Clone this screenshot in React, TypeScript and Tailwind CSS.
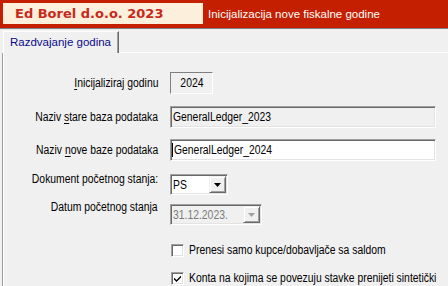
import React from "react";

const base = "font-['Liberation_Sans',sans-serif] text-[12.5px] leading-[14px] whitespace-nowrap";
const squeeze = "inline-block scale-x-[0.83]";
const sunken =
  "border border-t-[#a0a0a0] border-l-[#a0a0a0] border-r-white border-b-white shadow-[inset_1px_1px_0_#696969,inset_-1px_-1px_0_#e3e3e3]";
const raised =
  "border border-t-[#f0f0f0] border-l-[#f0f0f0] border-r-[#696969] border-b-[#696969] shadow-[inset_1px_1px_0_#ffffff,inset_-1px_-1px_0_#a0a0a0]";

function Label({ children, lift = "" }: { children: React.ReactNode; lift?: string }) {
  return (
    <div className={`w-[155px] shrink-0 text-right text-black ${base} ${lift}`}>
      <span className={`${squeeze} origin-right`}>{children}</span>
    </div>
  );
}

function Combo({ value, width, disabled }: { value: string; width: string; disabled?: boolean }) {
  return (
    <div
      className={`ml-[12px] flex h-[21px] ${width} items-stretch ${sunken} ${
        disabled ? "bg-[#f0f0f0]" : "bg-white"
      }`}
    >
      <div
        className={`flex flex-1 items-center pl-[2px] ${base} ${
          disabled ? "text-[#7a7a7a]" : "text-black"
        }`}
      >
        <span className={`${squeeze} origin-left`}>{value}</span>
      </div>
      <div className={`my-[1px] mr-[1px] flex w-[17px] items-center justify-center bg-[#f0f0f0] ${raised}`}>
        <svg width="7" height="4" viewBox="0 0 7 4">
          <path d="M0 0h7L3.5 4z" fill={disabled ? "#a0a0a0" : "#000"} />
        </svg>
      </div>
    </div>
  );
}

function Check({ checked, label, mt }: { checked?: boolean; label: string; mt: string }) {
  return (
    <div className={`flex items-center ${mt}`}>
      <div className={`ml-[168px] flex h-[13px] w-[13px] shrink-0 items-center justify-center bg-white ${sunken}`}>
        {checked && (
          <svg width="7" height="7" viewBox="0 0 7 7">
            <path d="M0 2.5l2.5 2.5L7 0.5v2L2.5 7 0 4.5z" fill="#000" />
          </svg>
        )}
      </div>
      <div className={`ml-[5px] w-[255px] text-black ${base}`}>
        <span className={`${squeeze} origin-left`}>{label}</span>
      </div>
    </div>
  );
}

export default function App() {
  return (
    <div className="h-[286px] w-[448px] overflow-hidden bg-[#f0f0f0] font-['Liberation_Sans',sans-serif]">
      <div className="flex h-[28px] items-start bg-[#c41f00] pl-[3px] pt-[3px]">
        <div className="flex h-[21px] w-[200px] items-center bg-[#fcefdc] pl-[12px] font-['DejaVu_Sans',sans-serif] text-[13px] font-bold text-[#c8281a]">
          Ed Borel d.o.o. 2023
        </div>
        <div className="ml-[5px] mt-[4px] text-[11.5px] leading-[14px] text-white">
          Inicijalizacija nove fiskalne godine
        </div>
      </div>
      <div className="h-px bg-[#7f7f7f]" />

      <div className="mt-[2px] flex h-[22px] items-stretch">
        <div className="ml-[3px] flex items-center border-l border-t border-l-white border-t-white border-r border-r-[#696969] pl-[6px] pr-[7px] text-[11.5px] leading-none text-[#0a0a8c] shadow-[inset_-1px_0_0_#a0a0a0]">
          Razdvajanje godina
        </div>
        <div className="flex-1 border-b border-b-white" />
      </div>

      <div className="ml-[2px] flex h-[240px] flex-col border-l border-l-[#a0a0a0] shadow-[inset_1px_0_0_#ffffff]">
        <div className="mt-[19px] flex items-center">
          <Label>
            <u className="underline-offset-2">I</u>nicijaliziraj godinu
          </Label>
          <div
            className={`ml-[12px] flex h-[22px] w-[43px] items-center justify-center border border-t-[#808080] border-l-[#808080] border-r-white border-b-white pb-px ${base} text-black`}
          >
            <span className={`${squeeze} origin-center`}>2024</span>
          </div>
        </div>

        <div className="mt-[12px] flex items-center">
          <Label>
            Naziv <u className="underline-offset-2">s</u>tare baza podataka
          </Label>
          <div className={`ml-[12px] flex h-[22px] w-[266px] items-center bg-[#f0f0f0] pl-[2px] ${base} text-black ${sunken}`}>
            <span className={`${squeeze} origin-left`}>GeneralLedger_2023</span>
          </div>
        </div>

        <div className="mt-[11px] flex items-center">
          <Label>
            Naziv <u className="underline-offset-2">n</u>ove baze podataka
          </Label>
          <div className={`ml-[12px] flex h-[22px] w-[266px] items-center bg-white pl-[1px] ${base} text-black ${sunken}`}>
            <span className="mr-px h-[14px] w-px shrink-0 bg-black" />
            <span className={`${squeeze} origin-left`}>GeneralLedger_2024</span>
          </div>
        </div>

        <div className="mt-[13px] flex items-start">
          <Label lift="-mt-[2px]">Dokument početnog stanja:</Label>
          <Combo value="PS" width="w-[58px]" />
        </div>

        <div className="mt-[9px] flex items-start">
          <Label lift="-mt-[4px]">Datum početnog stanja</Label>
          <Combo value="31.12.2023." width="w-[92px]" disabled />
        </div>

        <Check label="Prenesi samo kupce/dobavljače sa saldom" mt="mt-[18px]" />
        <Check label="Konta na kojima se povezuju stavke prenijeti sintetički" checked mt="mt-[14px]" />
      </div>
    </div>
  );
}
